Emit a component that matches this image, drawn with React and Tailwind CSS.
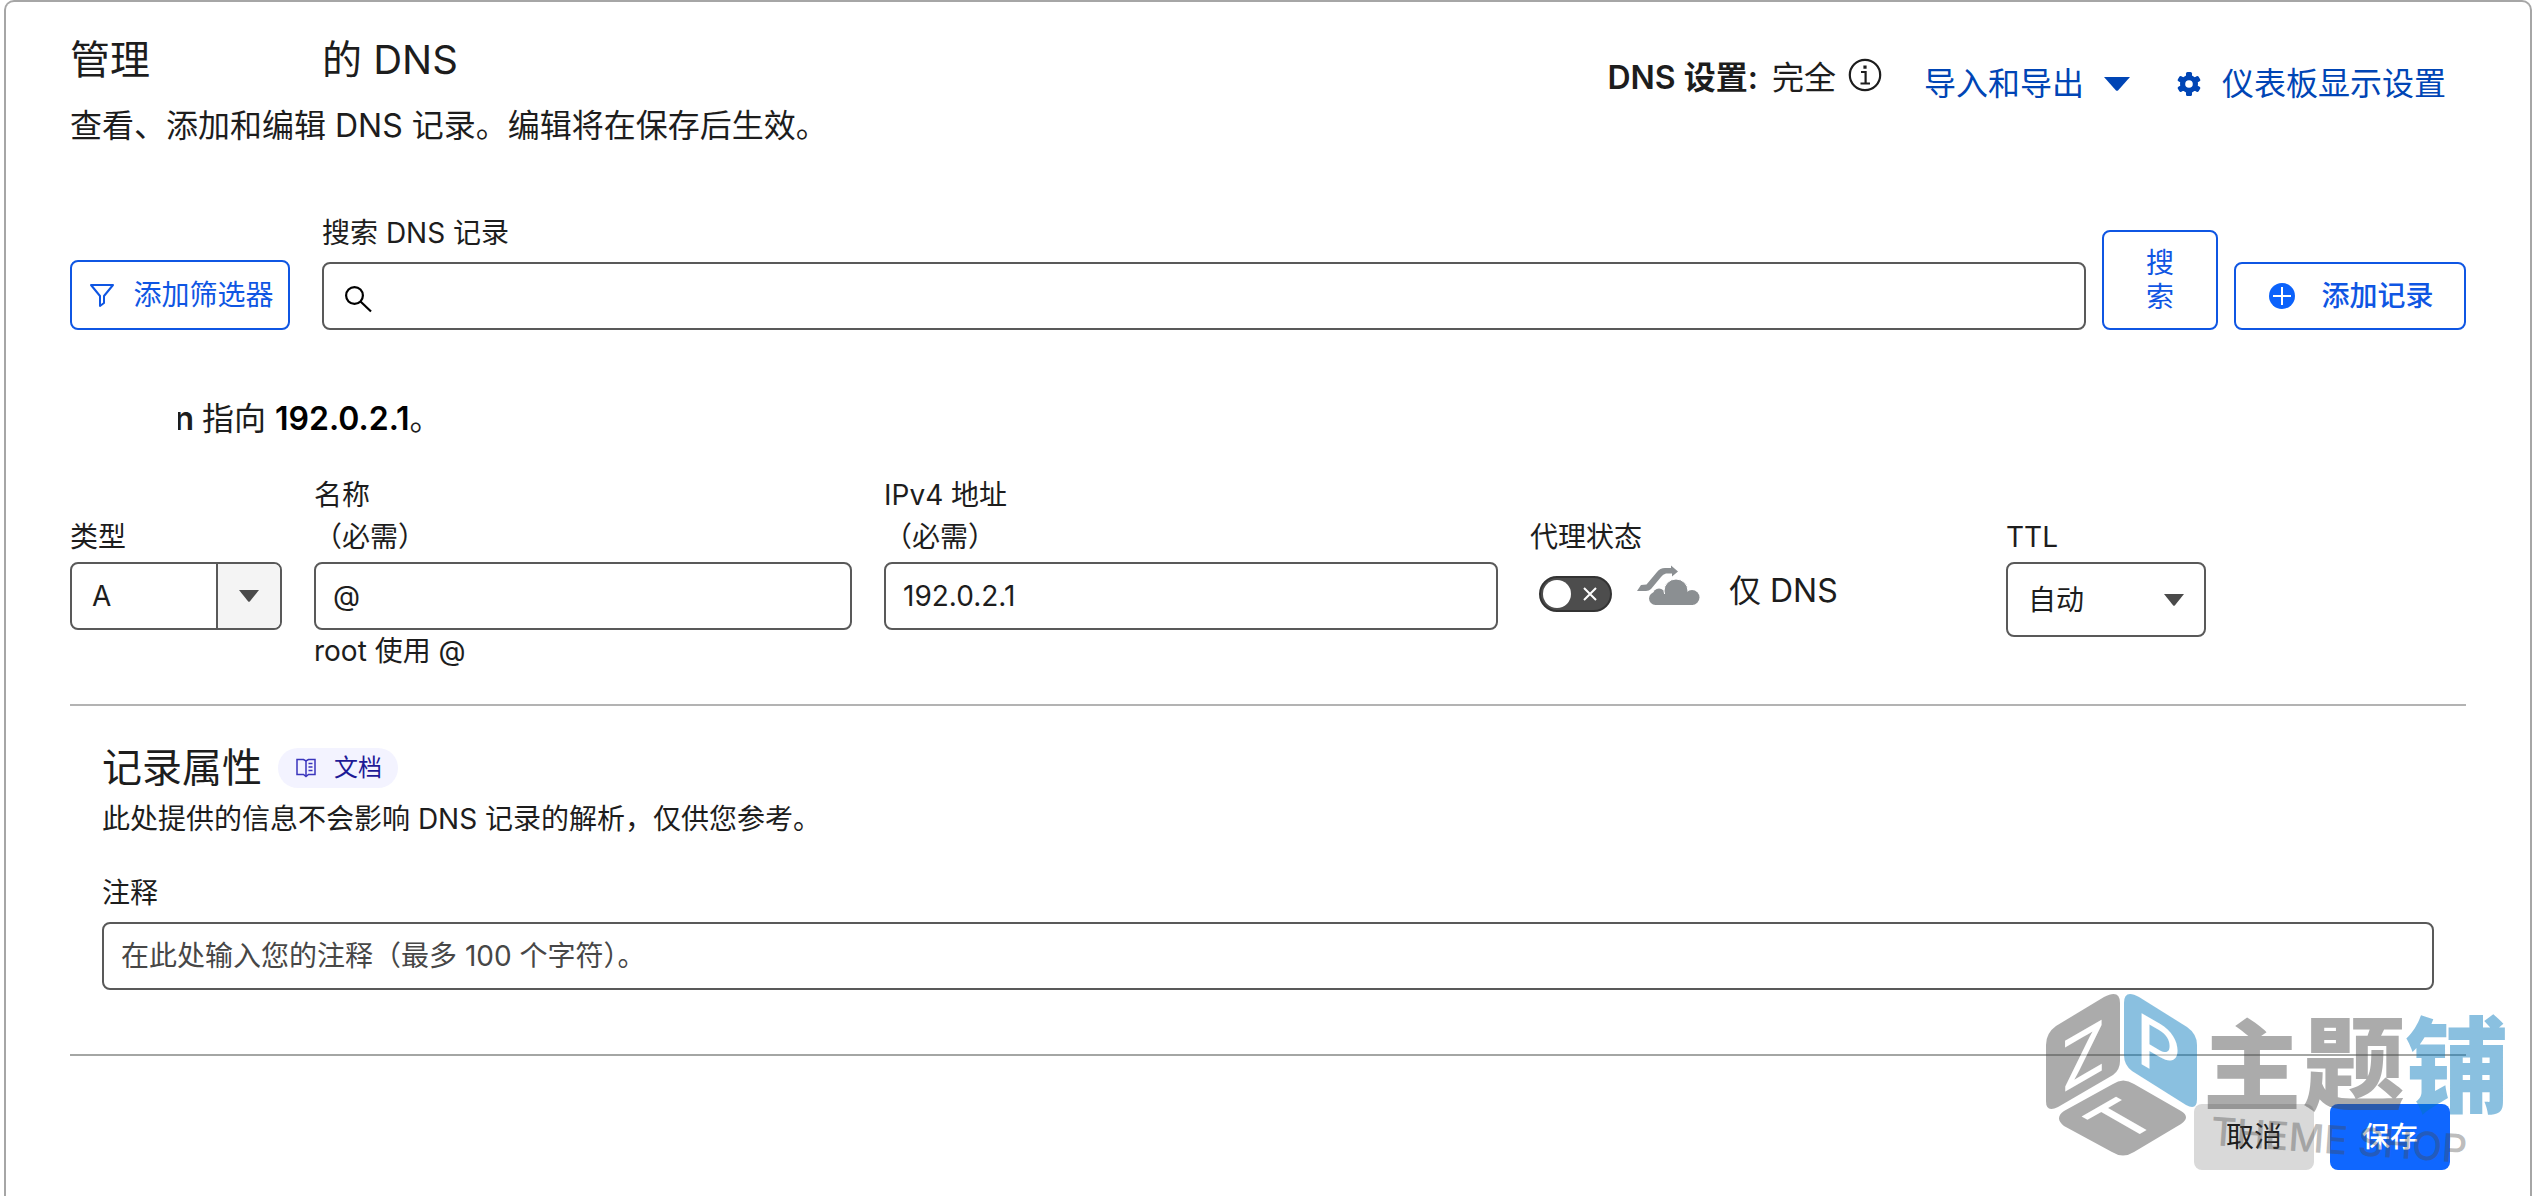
import React, { useState } from 'react';

const inputClass =
  'h-[68px] w-full rounded-lg border-2 border-[#595959] bg-white px-[17px] text-[28px] text-[#1d1d1d] outline-none placeholder:text-[#474747] placeholder:opacity-100';

const FilterIcon = () => (
  <svg width="26" height="26" viewBox="0 0 26 26" fill="none" stroke="currentColor" strokeWidth="2" strokeLinejoin="round">
    <path d="M2 3H24L15 14V21L11 24V14Z" />
  </svg>
);

const SearchIcon = () => (
  <svg width="28" height="28" viewBox="0 0 28 28" fill="none" stroke="#000" strokeWidth="2.2">
    <circle cx="10.5" cy="10.5" r="8.4" />
    <path d="M16.5 16.5L27 26.5" />
  </svg>
);

const InfoIcon = () => (
  <svg width="34" height="34" viewBox="0 0 34 34" fill="none" stroke="currentColor" strokeWidth="2.2">
    <circle cx="17" cy="17" r="15.2" />
    <path d="M13 14H17.6V25M12.5 25.5H22" />
    <path d="M15.4 9.2H18.6" strokeWidth="3.2" />
  </svg>
);

const GearIcon = () => (
  <svg width="26" height="26" viewBox="0 0 26 26">
    <g fill="currentColor">
      <rect x="10" y="1" width="6" height="24" rx="1.5" />
      <rect x="10" y="1" width="6" height="24" rx="1.5" transform="rotate(60 13 13)" />
      <rect x="10" y="1" width="6" height="24" rx="1.5" transform="rotate(120 13 13)" />
      <circle cx="13" cy="13" r="9" />
    </g>
    <circle cx="13" cy="13" r="3.8" fill="#fff" />
  </svg>
);

const PlusIcon = () => (
  <svg width="26" height="26" viewBox="0 0 26 26">
    <circle cx="13" cy="13" r="13" fill="#0b62fb" />
    <path d="M13 4V22M4 13H22" stroke="#fff" strokeWidth="2" />
  </svg>
);

const BookIcon = () => (
  <svg width="20" height="20" viewBox="0 0 20 20" fill="none" stroke="#3a35bd" strokeWidth="1.5">
    <path d="M1 1.5H7.5L10 3L12.5 1.5H19V16.5H12.5L10 18.5L7.5 16.5H1Z" />
    <path d="M10 3V18M12.5 5.5H16.5M12.5 9H16.5M12.5 12.5H16.5" />
  </svg>
);

const Caret = ({ className }) => (
  <svg className={className} viewBox="0 0 26 14" preserveAspectRatio="none" fill="currentColor">
    <path d="M0 0H26L14 13.4Q13 14 12 13.4Z" />
  </svg>
);

const CloudIcon = () => (
  <svg width="64" height="42" viewBox="0 0 64 42" fill="#8b8f92">
    <path d="M0 26L4 20L9.5 19.5L20 7Q23 3 28 3H34V0.5L41 6.5L35 11.5V8.5H29Q26 9 24 12L14 24Q12 26 9 26Z" />
    <circle cx="18.5" cy="33.5" r="6.5" />
    <circle cx="22" cy="29.5" r="6" />
    <circle cx="39" cy="26" r="12" stroke="#fff" strokeWidth="1" />
    <circle cx="55" cy="32.5" r="7.5" />
    <rect x="18" y="29" width="38" height="11" />
  </svg>
);

const Watermark = () => (
  <svg
    className="pointer-events-none absolute -top-[65px] -right-[50px] opacity-[0.46]"
    width="476"
    height="180"
    viewBox="0 0 476 180"
    aria-hidden="true"
  >
    <g fill="#494949">
      <path d="M64 8Q80 0 80 14V72Q80 81 73 86L18 118Q6 124 6 112V56Q6 44 16 37Z" />
      <path d="M73 95Q83 88 94 95L141 122Q151 128 141 135L94 163Q83 170 72 163L24 137Q14 129 24 122Z" />
    </g>
    <path d="M99 8Q84 0 84 14V66Q84 76 92 82L146 116Q157 122 157 110V56Q157 45 147 38Z" fill="#0378bc" />
    <g fill="#fff" fontSize="70" fontWeight="500">
      <text transform="translate(21 105) skewY(-30)">Z</text>
      <text transform="translate(96 72) skewY(30)">P</text>
      <text transform="matrix(.87 -.5 .87 .5 103 143)" textAnchor="middle">T</text>
    </g>
    <g fontWeight="900" fill="#494949">
      <text x="163" y="113" fontSize="98">主</text>
      <text x="263" y="113" fontSize="102">题</text>
      <text x="365" y="116" fontSize="104" fill="#0378bc">铺</text>
    </g>
    <text transform="translate(170 156) rotate(4)" fontSize="39" fontWeight="500" fill="#494949" fillOpacity="0.8">
      THEME SHOP
    </text>
  </svg>
);

const Field = ({ id, label, required, hint, children }) => (
  <div>
    <div className="mb-1 flex min-h-[84px] items-end">
      <label htmlFor={id} className="leading-[42px]">
        {label}
        {required && <span className="block">（必需）</span>}
      </label>
    </div>
    {children}
    {hint && <p className="leading-[42px]">{hint}</p>}
  </div>
);

export default function App() {
  const [query, setQuery] = useState('');
  const [type, setType] = useState('A');
  const [name, setName] = useState('@');
  const [address, setAddress] = useState('192.0.2.1');
  const [proxied, setProxied] = useState(false);
  const [ttl, setTtl] = useState('auto');
  const [comment, setComment] = useState('');

  return (
    <div className="bg-white font-['Inter','Noto_Sans_CJK_SC',sans-serif]" lang="zh-CN">
      <main className="mx-1 min-h-screen overflow-hidden rounded-t-[10px] border-2 border-b-0 border-[#a6a6a6] px-16 text-[28px] text-[#1d1d1d]">
        <header className="flex items-start justify-between pt-[34px] pr-5">
          <div>
            <h1 className="flex text-[40px] leading-[48px]">
              <span className="w-[252px]">管理</span>
              <span>的 DNS</span>
            </h1>
            <p className="mt-[18px] text-[32px] leading-[48px]">查看、添加和编辑 DNS 记录。编辑将在保存后生效。</p>
          </div>
          <div className="flex items-start pt-[18px] text-[32px] leading-[48px]">
            <div className="flex">
              <span className="mr-[14px] font-semibold">DNS 设置:</span>
              <span className="mr-3">完全</span>
              <button type="button" aria-label="DNS 设置" className="mt-1 h-[34px]">
                <InfoIcon />
              </button>
            </div>
            <button type="button" className="mt-[6px] ml-[42px] flex items-center gap-5 text-[#0045b5]">
              导入和导出
              <Caret className="h-[14px] w-[26px]" />
            </button>
            <a href="#display" className="mt-[6px] ml-[46px] flex items-center gap-5 text-[#0045b5]">
              <GearIcon />
              仪表板显示设置
            </a>
          </div>
        </header>

        <div className="mt-[62px] flex items-end">
          <button type="button" className="flex h-[70px] w-[220px] items-center justify-center gap-[18px] rounded-lg border-2 border-[#0f56e3] pl-[3px] text-[#0f56e3]">
            <FilterIcon />
            添加筛选器
          </button>
          <div className="ml-8 flex-1">
            <label htmlFor="search" className="mb-2 block leading-[42px]">搜索 DNS 记录</label>
            <div className="flex h-[68px] items-center gap-4 rounded-lg border-2 border-[#595959] px-5 pt-[6px]">
              <SearchIcon />
              <input id="search" value={query} onChange={(e) => setQuery(e.target.value)} className="min-w-0 flex-1 outline-none" />
            </div>
          </div>
          <button type="button" className="ml-4 flex h-[100px] w-[116px] items-center justify-center rounded-lg border-2 border-[#0f56e3] text-[#0f56e3]">
            <span className="w-7 leading-[34px]">搜索</span>
          </button>
          <button type="button" className="ml-4 flex h-[68px] w-[232px] items-center justify-center gap-[26px] rounded-lg border-2 border-[#0f56e3] pl-[3px] font-medium text-[#0f56e3]">
            <PlusIcon />
            添加记录
          </button>
        </div>

        <p className="mt-[65px] ml-[108px] flex text-[32px] leading-[48px]">
          <span className="mr-2 flex w-4 justify-end overflow-hidden font-semibold">n</span>
          <span>指向 <strong className="font-semibold text-black">192.0.2.1</strong>。</span>
        </p>

        <div className="mt-[31px] grid grid-cols-[212fr_538fr_614fr_444fr_200fr_228fr] items-start gap-x-8">
          <Field id="type" label="类型">
            <div className="relative">
              <select
                id="type"
                value={type}
                onChange={(e) => setType(e.target.value)}
                className="h-[68px] w-full appearance-none rounded-lg border-2 border-[#595959] bg-white px-5 outline-none"
              >
                <option>A</option>
                <option>AAAA</option>
                <option>CNAME</option>
                <option>MX</option>
                <option>TXT</option>
              </select>
              <span className="pointer-events-none absolute inset-y-[2px] right-[2px] flex w-[64px] items-center justify-center rounded-r-md border-l-2 border-[#595959] bg-[#f4f4f4] text-[#4a4a4a]">
                <Caret className="h-3 w-5" />
              </span>
            </div>
          </Field>
          <Field id="name" label="名称" required hint="root 使用 @">
            <input id="name" value={name} onChange={(e) => setName(e.target.value)} className={inputClass} />
          </Field>
          <Field id="address" label="IPv4 地址" required>
            <input id="address" value={address} onChange={(e) => setAddress(e.target.value)} className={inputClass} />
          </Field>
          <Field id="proxied" label="代理状态">
            <div className="flex h-[58px] items-center pl-[9px] text-[32px]">
              <label className="relative mt-[6px] flex h-9 w-[73px] items-center rounded-full border-2 border-[#333] bg-[#4d4d4d]">
                <input
                  id="proxied"
                  type="checkbox"
                  checked={proxied}
                  onChange={(e) => setProxied(e.target.checked)}
                  className="peer sr-only"
                />
                <span className="ml-[2px] h-7 w-7 rounded-full bg-white peer-checked:ml-[38px]" />
                <svg className="ml-3 peer-checked:hidden" width="14" height="14" viewBox="0 0 14 14" stroke="#fff" strokeWidth="2">
                  <path d="M1 1L13 13M13 1L1 13" />
                </svg>
              </label>
              <span className="mr-7 mb-[10px] ml-[25px]">
                <CloudIcon />
              </span>
              仅 DNS
            </div>
          </Field>
          <Field id="ttl" label="TTL">
            <div className="relative">
              <select
                id="ttl"
                value={ttl}
                onChange={(e) => setTtl(e.target.value)}
                className="h-[75px] w-full appearance-none rounded-lg border-2 border-[#595959] bg-white px-5 outline-none"
              >
                <option value="auto">自动</option>
                <option value="60">1 分钟</option>
                <option value="300">5 分钟</option>
              </select>
              <span className="pointer-events-none absolute inset-y-0 right-[22px] flex items-center text-[#4a4a4a]">
                <Caret className="h-3 w-5" />
              </span>
            </div>
          </Field>
        </div>

        <hr className="mt-8 border-t-2 border-[#b3b3b3]" />

        <section className="px-8 pt-[38px]">
          <div className="flex items-center gap-4">
            <h2 className="text-[40px] leading-[48px]">记录属性</h2>
            <a href="#docs" className="flex h-10 items-center gap-[18px] rounded-full bg-[#f3f3ff] pr-4 pl-[18px] text-[24px] text-[#1e1a96]">
              <BookIcon />
              文档
            </a>
          </div>
          <p className="mt-[6px] leading-[42px]">此处提供的信息不会影响 DNS 记录的解析，仅供您参考。</p>
          <label htmlFor="comment" className="mt-8 mb-2 block leading-[42px]">注释</label>
          <input
            id="comment"
            value={comment}
            onChange={(e) => setComment(e.target.value)}
            placeholder="在此处输入您的注释（最多 100 个字符）。"
            className={inputClass}
          />
        </section>

        <div className="relative mt-16">
          <hr className="border-t-2 border-[#a4a6a4]" />
          <div className="mt-12 flex justify-end gap-4 pr-4">
            <button type="button" className="h-[66px] w-[120px] rounded-lg bg-[#d9d9d9]">取消</button>
            <button type="button" className="h-[66px] w-[120px] rounded-lg bg-[#0f67ff] font-medium text-white">保存</button>
          </div>
          <Watermark />
        </div>
      </main>
    </div>
  );
}
